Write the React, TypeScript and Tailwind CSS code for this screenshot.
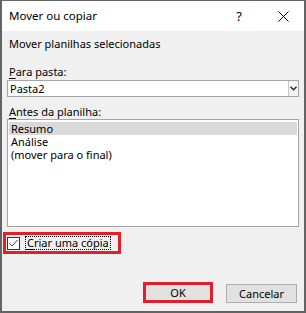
import * as React from "react";

const rows = ["Resumo", "Análise", "(mover para o final)"];

export default function App() {
  return (
    <div className="w-[306px] h-[313px] flex flex-col bg-[#f0f0f0] border-x-2 border-b-2 border-t border-[#646464] font-['Noto_Sans',sans-serif] text-[11px] text-black">
      {/* title bar */}
      <div className="h-[30px] shrink-0 flex items-center bg-white pl-[7px]">
        <span className="leading-[16px] text-[11.5px]">Mover ou copiar</span>
        <span className="ml-auto text-[13px] leading-[16px] mr-[36px]">?</span>
        <svg width="11" height="11" viewBox="0 0 11 11" className="mr-[15px]">
          <path d="M0.5 0.5 L10.5 10.5 M10.5 0.5 L0.5 10.5" stroke="#000" strokeWidth="1" fill="none" />
        </svg>
      </div>

      <div className="flex-1 flex flex-col px-[5px] pb-[8px]">
        <p className="mt-[5px] leading-[16px] pl-[2px]">Mover planilhas selecionadas</p>

        <p className="mt-[12px] leading-[16px] pl-[2px]">
          <span className="underline underline-offset-2">P</span>ara pasta:
        </p>
        <div className="h-[17px] flex bg-white border border-[#a5a5a5]">
          <span className="flex-1 pl-[2px] leading-[15px]">Pasta2</span>
          <div className="w-[10px] flex items-center justify-center border-l border-[#c8c8c8] bg-[#f4f4f4]">
            <svg width="7" height="5" viewBox="0 0 7 5">
              <path d="M0.5 0.8 L3.5 3.8 L6.5 0.8" stroke="#222" strokeWidth="1.3" fill="none" />
            </svg>
          </div>
        </div>

        <p className="mt-[7px] leading-[15px] pl-[2px]">
          <span className="underline underline-offset-2">A</span>ntes da planilha:
        </p>
        <div className="h-[108px] flex flex-col bg-white border border-[#a5a5a5] pt-[2px] px-[1px]">
          {rows.map((r, i) => (
            <div
              key={r}
              className={"h-[13px] leading-[13px] pl-[2px] whitespace-nowrap " + (i === 0 ? "bg-[#d9d9d9]" : "")}
            >
              {r}
            </div>
          ))}
        </div>

        {/* checkbox */}
        <div className="mt-[5px] ml-[-4px] w-[118px] h-[22px] flex items-center border-[3px] border-[#e01f2c]">
          <div className="ml-[1px] w-[13px] h-[13px] shrink-0 bg-white border border-[#333] flex items-center justify-center">
            <svg width="11" height="11" viewBox="0 0 11 11">
              <path d="M1.5 5.5 L4 8 L9.5 2" stroke="#444" strokeWidth="1" fill="none" />
            </svg>
          </div>
          <span className="ml-[5px] h-[14px] px-[1px] leading-[12px] whitespace-nowrap border border-dotted border-black">
            <span className="underline underline-offset-2">C</span>riar uma cópia
          </span>
        </div>

        {/* buttons */}
        <div className="mt-auto flex items-end justify-end gap-[13px] pr-[2px]">
          <div className="w-[70px] h-[21px] flex items-center justify-center bg-[#e1e1e1] border-[3px] border-[#e01f2c] leading-[14px]">
            OK
          </div>
          <div className="w-[71px] h-[19px] flex items-center justify-center bg-[#e1e1e1] border border-[#adadad] leading-[14px]">
            Cancelar
          </div>
        </div>
      </div>
    </div>
  );
}
